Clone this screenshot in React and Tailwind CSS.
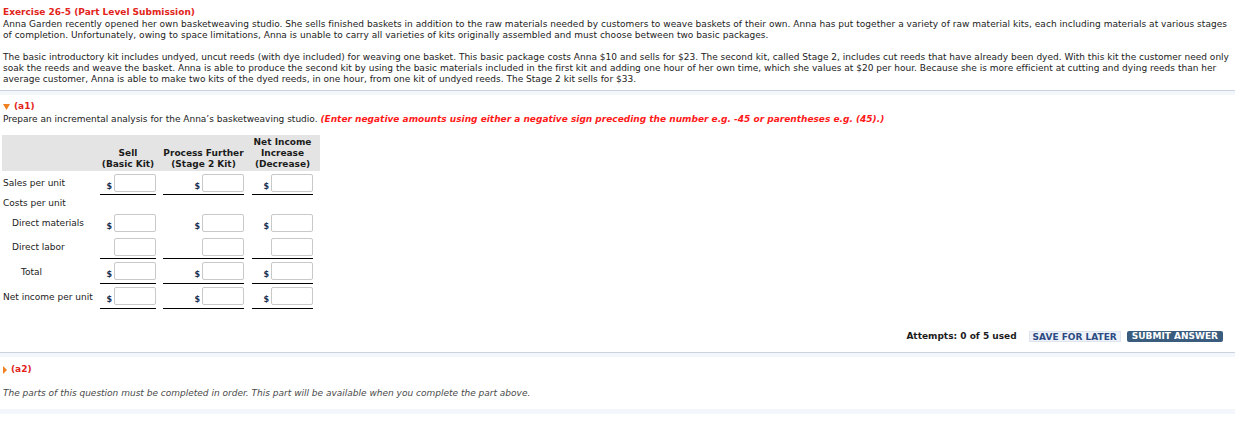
import React from "react";

const F = { fontFamily: '"DejaVu Sans", Verdana, sans-serif' };

function Cell({ dollar = true, line = true, ml, mr, pb }) {
  return (
    <div className={`flex items-end justify-end pt-[3px] ${pb} ${ml} ${mr} ${line ? "border-b border-black" : "border-b border-transparent"}`}>
      {dollar && <span className="font-bold text-[8px] leading-[8px] mr-[2px] mb-[1px] text-[#1b3050]">$</span>}
      <div className="w-[42px] h-[18px] border border-[#c9c9c9] rounded-[2px] bg-white" />
    </div>
  );
}

function Row({ label, indent = "pl-[1px]", dollar = true, line = true, pb = "pb-[2px]" }) {
  return (
    <div className="grid grid-cols-[98px_60px_88px_72px] items-center">
      <div className={`${indent} pt-[1px]`}>{label}</div>
      <Cell dollar={dollar} line={line} pb={pb} ml="ml-0" mr="mr-[4px]" />
      <Cell dollar={dollar} line={line} pb={pb} ml="ml-[3px]" mr="mr-[4px]" />
      <Cell dollar={dollar} line={line} pb={pb} ml="ml-[4px]" mr="mr-[7px]" />
    </div>
  );
}

export default function App() {
  return (
    <div style={F} className="w-[1235px] h-[428px] bg-white text-[#1b1b1b] text-[9px] leading-[11px] overflow-hidden">
      <div className="px-[3px] pt-[7px]">
        <div className="font-bold text-[#e2231a] text-[9px] leading-[11px]">Exercise 26-5 (Part Level Submission)</div>
        <p className="mt-[1px] tracking-[0.03px]">
          Anna Garden recently opened her own basketweaving studio. She sells finished baskets in addition to the raw materials needed by customers to weave baskets of their own. Anna has put together a variety of raw material kits, each including materials at various stages of completion. Unfortunately, owing to space limitations, Anna is unable to carry all varieties of kits originally assembled and must choose between two basic packages.
        </p>
        <p className="mt-[11px] tracking-[0.015px]">
          The basic introductory kit includes undyed, uncut reeds (with dye included) for weaving one basket. This basic package costs Anna $10 and sells for $23. The second kit, called Stage 2, includes cut reeds that have already been dyed. With this kit the customer need only soak the reeds and weave the basket. Anna is able to produce the second kit by using the basic materials included in the first kit and adding one hour of her own time, which she values at $20 per hour. Because she is more efficient at cutting and dying reeds than her average customer, Anna is able to make two kits of the dyed reeds, in one hour, from one kit of undyed reeds. The Stage 2 kit sells for $33.
        </p>
      </div>
      <div className="mt-[5px] border-t border-[#c9d3df] h-[5px] bg-[#f3f6fa]" />

      <div className="px-[3px] pt-[6px]">
        <div className="flex items-center gap-[4px] font-bold text-[#e2231a] text-[9px] leading-[11px]">
          <svg width="7" height="6" viewBox="0 0 7 6"><polygon points="0,0 7,0 3.5,6" fill="#f08020" /></svg>
          <span>(a1)</span>
        </div>
        <p className="mt-[2px]">
          Prepare an incremental analysis for the Anna’s basketweaving studio.{" "}
          <span className="font-bold italic text-[#ff1a1a]">(Enter negative amounts using either a negative sign preceding the number e.g. -45 or parentheses e.g. (45).)</span>
        </p>

        <div className="mt-[10px] ml-[-1px] w-[318px]">
          <div className="grid grid-cols-[98px_60px_88px_72px] bg-[#e4e4e4] font-bold text-center leading-[11px] pt-[1px] pb-[1px] h-[36px] items-end">
            <div />
            <div className="mr-[4px]">Sell<br />(Basic Kit)</div>
            <div className="ml-[3px] mr-[4px]">Process Further<br />(Stage 2 Kit)</div>
            <div className="ml-[4px] mr-[7px]">Net Income<br />Increase<br />(Decrease)</div>
          </div>
          <Row label="Sales per unit" />
          <div className="pl-[1px] h-[16px] flex items-center">Costs per unit</div>
          <Row label="Direct materials" indent="pl-[10px]" line={false} />
          <Row label="Direct labor" indent="pl-[10px]" dollar={false} />
          <Row label="Total" indent="pl-[19px]" pb="pb-[3px]" />
          <Row label="Net income per unit" pb="pb-[3px]" />
        </div>

        <div className="mt-[22px] flex justify-end items-center pr-[9px] font-bold">
          <span className="mr-[12px]">Attempts: 0 of 5 used</span>
          <span className="px-[3px] h-[11px] leading-[11px] bg-[#eef2f8] border border-[#dfe5ee] text-[#2b4a84] mr-[6px]">SAVE FOR LATER</span>
          <span className="px-[5px] h-[11px] leading-[11px] bg-[#3a5c7e] text-white rounded-[2px]">SUBMIT ANSWER</span>
        </div>
      </div>

      <div className="mt-[10px] border-t border-[#c9d3df] h-[5px] bg-[#f3f6fa]" />
      <div className="px-[3px] pt-[7px]">
        <div className="flex items-center gap-[4px] font-bold text-[#e2231a] text-[9px] leading-[11px]">
          <svg width="4" height="8" viewBox="0 0 4 8"><polygon points="0,0 4,4 0,8" fill="#f08020" /></svg>
          <span>(a2)</span>
        </div>
        <p className="mt-[13px] italic text-[#4a4a4a]">
          The parts of this question must be completed in order. This part will be available when you complete the part above.
        </p>
      </div>
      <div className="mt-[10px] h-[5px] bg-[#f3f6fa]" />
    </div>
  );
}
